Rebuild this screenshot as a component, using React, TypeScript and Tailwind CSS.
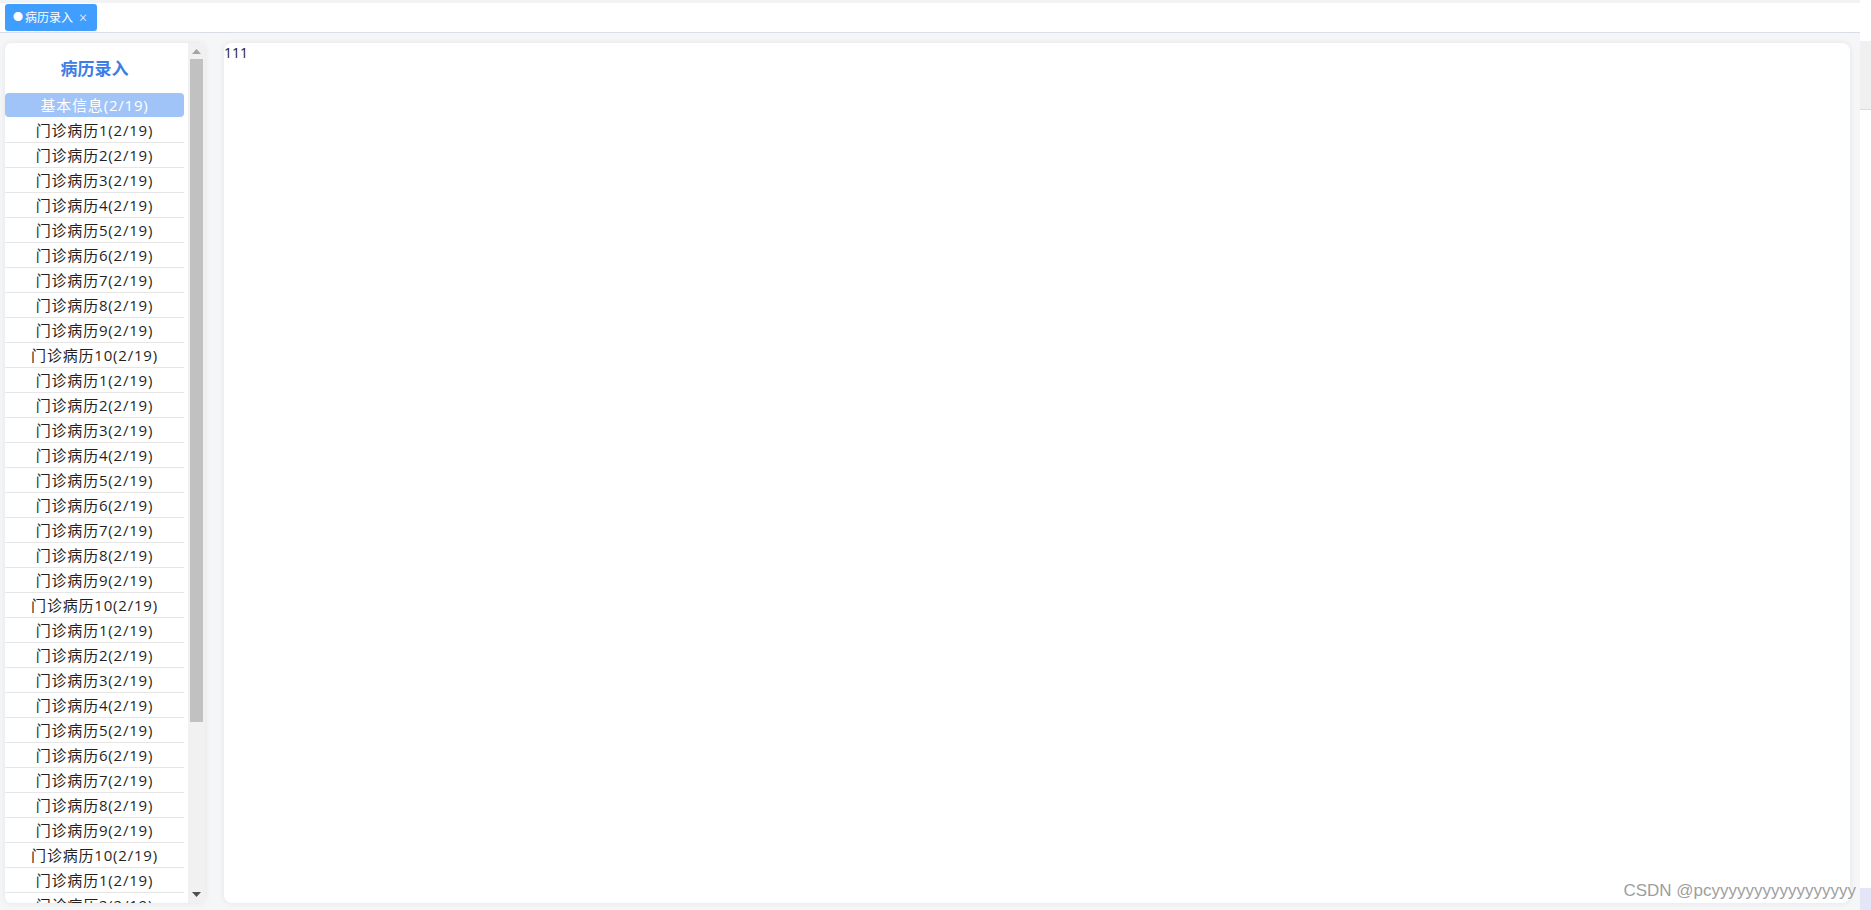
import React from 'react'

const font = { fontFamily: '"Open Sans", "Noto Sans CJK SC", sans-serif' }

const records = [
  ...Array.from({ length: 10 }, (_, i) => `门诊病历${i + 1}(2/19)`),
  ...Array.from({ length: 10 }, (_, i) => `门诊病历${i + 1}(2/19)`),
  ...Array.from({ length: 10 }, (_, i) => `门诊病历${i + 1}(2/19)`),
  ...Array.from({ length: 10 }, (_, i) => `门诊病历${i + 1}(2/19)`),
]

function FakeScrollbar() {
  return (
    <div className="flex w-[17px] shrink-0 flex-col items-center bg-[#f1f1f1] py-[5px]">
      <svg width="9" height="5" viewBox="0 0 9 5" className="mt-[1px]">
        <path d="M0 5 L4.5 0 L9 5 Z" fill="#a3a3a3" />
      </svg>
      <div className="mt-[5px] h-[663px] w-[13px] bg-[#c1c1c1]" />
      <div className="flex-1" />
      <svg width="9" height="5" viewBox="0 0 9 5" className="mb-[1px]">
        <path d="M0 0 L4.5 5 L9 0 Z" fill="#505050" />
      </svg>
    </div>
  )
}

function RecordSidebar() {
  return (
    <div className="flex w-[200px] shrink-0 overflow-hidden rounded-[6px] bg-white shadow-[0_0_6px_rgba(0,0,0,0.08)]">
      <div className="min-w-0 flex-1 overflow-hidden pr-[4px]">
        <div className="flex h-[50px] items-center justify-center pt-[2px] text-[17px] font-bold text-[#3d7ee6]">
          病历录入
        </div>
        <div className="flex h-[24px] items-center justify-center rounded-[4px] bg-[#a0c3f8] text-[15px] tracking-[0.8px] text-white">
          基本信息(2/19)
        </div>
        <div className="h-px" />
        {records.map((r, i) => (
          <div
            key={i}
            className="flex h-[25px] items-center justify-center whitespace-nowrap border-b border-[#e6e6e6] text-[15px] tracking-[0.8px] text-[#1f1f1f]"
          >
            {r}
          </div>
        ))}
      </div>
      <FakeScrollbar />
    </div>
  )
}

export default function App() {
  return (
    <div style={font} className="flex h-[910px] w-[1871px] overflow-hidden bg-white">
      {/* ── app area ───────────────────────────────────────────── */}
      <div className="relative flex w-[1860px] shrink-0 flex-col bg-[#f5f6f8]">
        <div className="h-[3px] bg-[#f2f3f5]" />
        <div className="flex h-[30px] items-start border-b border-[#d8dde8] bg-white pl-[5px] pt-[1px]">
          <div className="flex h-[27px] items-center gap-[2px] rounded-[3px] bg-[#409eff] pl-[8px] pr-[10px] text-[12px] text-white">
            <span className="text-[10px]">●</span>
            <span>病历录入</span>
            <span className="ml-[4px] text-[14px] font-light leading-none">×</span>
          </div>
        </div>

        <div className="flex min-h-0 flex-1 gap-[19px] pb-[7px] pl-[5px] pr-[10px] pt-[10px]">
          <RecordSidebar />
          <div className="min-w-0 flex-1 rounded-[8px] bg-white text-[14px] leading-[20px] text-[#222] shadow-[0_0_6px_rgba(0,0,0,0.08)]">
            111
          </div>
        </div>

        {/* watermark */}
        <div
          className="absolute bottom-[7px] right-[4px] text-[17px] text-[#9e9e9e] [text-shadow:0_0_2px_#fff]"
          style={{ fontFamily: '"Liberation Sans", Arial, sans-serif' }}
        >
          CSDN @pcyyyyyyyyyyyyyyyyy
        </div>
      </div>

      {/* ── page edge behind ───────────────────────────────────── */}
      <div className="flex w-[11px] shrink-0 flex-col">
        <div className="h-[41px] bg-white" />
        <div className="h-[69px] border-b border-[#dcdcdc] bg-[#f0f0f0]" />
        <div className="flex-1 bg-white" />
        <div className="h-[22px] bg-[#e4e6f7]" />
      </div>
    </div>
  )
}
